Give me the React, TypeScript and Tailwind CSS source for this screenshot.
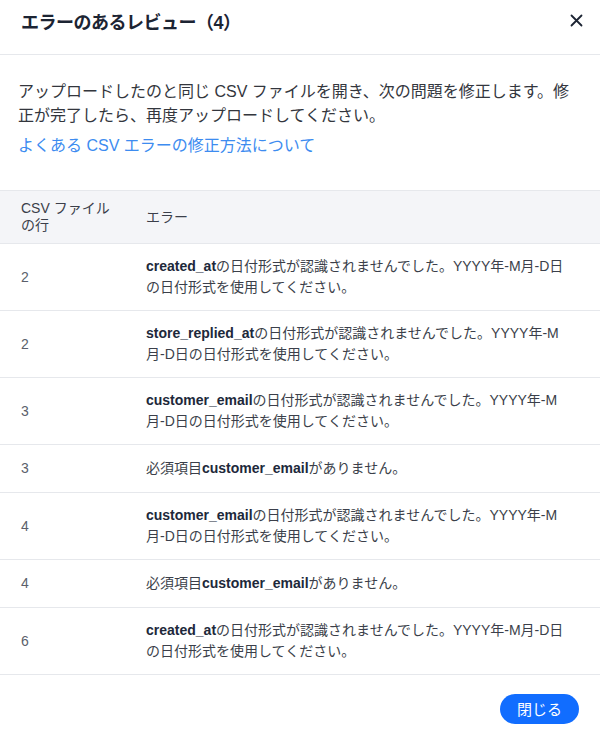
import React from "react";

const font = {
  fontFamily: '"Liberation Sans", "Noto Sans CJK JP", sans-serif',
};

type Row = { line: string; field: string; kind: "date" | "missing" };

const rows: Row[] = [
  { line: "2", field: "created_at", kind: "date" },
  { line: "2", field: "store_replied_at", kind: "date" },
  { line: "3", field: "customer_email", kind: "date" },
  { line: "3", field: "customer_email", kind: "missing" },
  { line: "4", field: "customer_email", kind: "date" },
  { line: "4", field: "customer_email", kind: "missing" },
  { line: "6", field: "created_at", kind: "date" },
];

export default function App() {
  return (
    <div className="w-[600px] h-[742px] bg-white flex flex-col overflow-hidden" style={font}>
      <div className="h-[55px] shrink-0 border-b border-[#e6e8ec] flex items-center justify-between pl-[21px] pr-[17px]">
        <h1 className="text-[18px] font-bold text-[#1c2433] leading-none -mt-[9px] tracking-[-0.5px]">
          エラーのあるレビュー（4）
        </h1>
        <svg width="13" height="13" viewBox="0 0 13 13" className="-mt-[14px]">
          <path d="M1.5 1.5 L11.5 11.5 M11.5 1.5 L1.5 11.5" stroke="#1c2433" strokeWidth="1.8" strokeLinecap="round" />
        </svg>
      </div>

      <div className="px-[18px] pt-[25px] pb-[32px] shrink-0">
        <p className="text-[16px] leading-[24px] text-[#33363d]">
          アップロードしたのと同じ CSV ファイルを開き、次の問題を修正します。修正が完了したら、再度アップロードしてください。
        </p>
        <a className="block text-[16px] leading-[24px] text-[#3d8cf0] mt-[6px]">
          よくある CSV エラーの修正方法について
        </a>
      </div>

      <div className="shrink-0">
        <div className="flex bg-[#f4f5f8] border-y border-[#e6e8ec] h-[54px] items-center text-[14px] leading-[17px] text-[#3b3f4a]">
          <div className="w-[146px] pl-[21px] pr-2 shrink-0">
            CSV ファイル
            <br />
            の行
          </div>
          <div>エラー</div>
        </div>
        {rows.map((r, i) => (
          <div
            key={i}
            className="flex items-center min-h-[48px] py-3 border-b border-[#e6e8ec] text-[14px] leading-[21px]"
          >
            <div className="w-[146px] pl-[21px] shrink-0 text-[#5b5f6b]">{r.line}</div>
            <div className="w-[420px] text-[#3b3f4a]">
              {r.kind === "date" ? (
                <>
                  <span className="font-bold text-[#20283a]">{r.field}</span>
                  の日付形式が認識されませんでした。YYYY年-M月-D日の日付形式を使用してください。
                </>
              ) : (
                <>
                  必須項目<span className="font-bold text-[#20283a]">{r.field}</span>がありません。
                </>
              )}
            </div>
          </div>
        ))}
      </div>

      <div className="flex justify-end pr-[21px] pt-[19px]">
        <button className="w-[79px] h-[30px] rounded-full bg-[#116dff] text-white text-[15px] leading-none">
          閉じる
        </button>
      </div>
    </div>
  );
}
